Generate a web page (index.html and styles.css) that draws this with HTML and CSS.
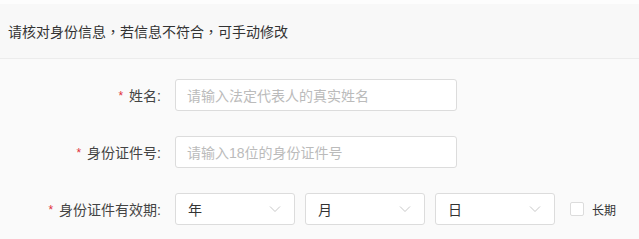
FILE: index.html
```html
<!DOCTYPE html>
<html lang="zh-CN">
<head>
<meta charset="utf-8">
<link rel="stylesheet" href="styles.css">
</head>
<body>
<div class="page">
  <div class="notice">请核对身份信息<span class="punct" lang="zh-TW">，</span>若信息不符合<span class="punct" lang="zh-TW">，</span>可手动修改</div>
  <form class="form">
    <div class="row">
      <label class="label"><span class="req">*</span>姓名:</label>
      <div class="input"><span class="ph">请输入法定代表人的真实姓名</span></div>
    </div>
    <div class="row">
      <label class="label"><span class="req">*</span>身份证件号:</label>
      <div class="input"><span class="ph">请输入18位的身份证件号</span></div>
    </div>
    <div class="row">
      <label class="label"><span class="req">*</span>身份证件有效期:</label>
      <div class="selects">
        <div class="select"><span>年</span><svg class="chev" width="12" height="8" viewBox="0 0 12 8"><path d="M1 1.5 L6 6.5 L11 1.5" fill="none" stroke="#c8c8c8" stroke-width="1"/></svg></div>
        <div class="select"><span>月</span><svg class="chev" width="12" height="8" viewBox="0 0 12 8"><path d="M1 1.5 L6 6.5 L11 1.5" fill="none" stroke="#c8c8c8" stroke-width="1"/></svg></div>
        <div class="select"><span>日</span><svg class="chev" width="12" height="8" viewBox="0 0 12 8"><path d="M1 1.5 L6 6.5 L11 1.5" fill="none" stroke="#c8c8c8" stroke-width="1"/></svg></div>
        <label class="check"><span class="box"></span>长期</label>
      </div>
    </div>
  </form>
</div>
</body>
</html>
```
FILE: styles.css
```css
* { box-sizing: border-box; }
html, body { margin: 0; padding: 0; }
body {
  background: #fafafa;
  font-family: "Liberation Sans", "Noto Sans CJK SC", sans-serif;
  color: #333;
  width: 639px;
  height: 239px;
  overflow: hidden;
}
.page {
  padding-top: 4px;
  background: #fdfdfd;
}
.notice {
  height: 55px;
  background: #f8f8f8;
  border-bottom: 1px solid #ececec;
  padding-left: 8px;
  font-size: 14px;
  line-height: 54px;
  color: #333;
}
.punct {
  font-family: "Noto Sans CJK TC", sans-serif;
}
.form {
  background: #fafafa;
  padding-top: 20px;
  margin: 0;
}
.row {
  display: flex;
  align-items: center;
  height: 32px;
  margin-bottom: 25px;
}
.label {
  width: 175px;
  padding-right: 14px;
  text-align: right;
  font-size: 14px;
  color: #444;
}
.req {
  color: #e0303a;
  font-size: 12px;
  margin-right: 6px;
  position: relative;
  top: -1px;
}
.input {
  width: 282px;
  height: 32px;
  background: #fff;
  border: 1px solid #dcdcdc;
  border-radius: 3px;
  padding-left: 11px;
  display: flex;
  align-items: center;
  font-size: 14px;
}
.ph { color: #bbb; }
.selects {
  display: flex;
  align-items: center;
  gap: 10px;
}
.select {
  width: 120px;
  height: 32px;
  background: #fff;
  border: 1px solid #dcdcdc;
  border-radius: 3px;
  display: flex;
  align-items: center;
  justify-content: space-between;
  padding: 0 13px 0 12px;
  font-size: 14px;
  color: #333;
}
.chev { display: block; }
.check {
  display: flex;
  align-items: center;
  margin-left: 5px;
  font-size: 12px;
  color: #333;
}
.box {
  width: 14px;
  height: 14px;
  border: 1px solid #dcdcdc;
  background: #fff;
  border-radius: 2px;
  margin-right: 8px;
}
```
